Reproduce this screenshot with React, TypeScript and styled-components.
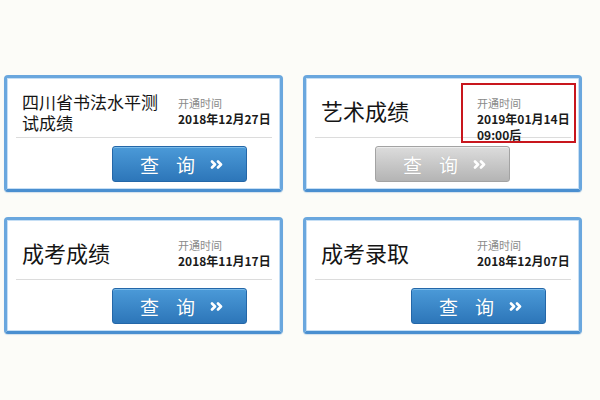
import React from "react";
import styled, { createGlobalStyle, css } from "styled-components";

const Global = createGlobalStyle`
  html, body { margin: 0; padding: 0; background: #fcfcf8; }
  body { font-family: "Noto Sans CJK SC", "Noto Sans", sans-serif; width: 600px; height: 400px; overflow: hidden; }
`;

const Grid = styled.div`
  display: grid;
  grid-template-columns: 279px 279px;
  grid-auto-rows: 117px;
  column-gap: 20px;
  row-gap: 25px;
  padding: 75px 0 0 4px;
`;

const Card = styled.div`
  box-sizing: border-box;
  border: 3px solid #6aa7de;
  border-bottom-color: #4a8fd0;
  border-radius: 4px;
  background: #fff;
  box-shadow: inset 0 0 0 1px #c6dff5, 0 1px 1px rgba(80, 140, 200, 0.25);
  display: flex;
  flex-direction: column;
`;

const Top = styled.div`
  box-sizing: border-box;
  height: 59px;
  display: flex;
  padding: 10px 2px 0 15px;
`;

const Title = styled.div<{ $small?: boolean }>`
  flex: 1;
  align-self: center;
  margin-bottom: ${(p) => (p.$small ? "2px" : "5px")};
  color: #151515;
  font-size: ${(p) => (p.$small ? "17px" : "22px")};
  line-height: ${(p) => (p.$small ? "21px" : "24px")};
  padding-right: 8px;
`;

const Info = styled.div`
  position: relative;
  width: 100px;
  margin-top: 8px;
  align-self: flex-start;
`;

const Label = styled.div`
  font-size: 11px;
  line-height: 15px;
  color: #8a8a8a;
`;

const DateText = styled.div`
  font-size: 12px;
  line-height: 16px;
  font-weight: 700;
  color: #1a1a1a;
  white-space: nowrap;
`;

const Highlight = styled.span`
  position: absolute;
  top: -13px;
  left: -16px;
  width: 115px;
  height: 60px;
  box-sizing: border-box;
  border: 2px solid #c8161d;
  pointer-events: none;
`;

const Divider = styled.div`
  height: 1px;
  background: #dcdcdc;
  margin: 0 8px 0 9px;
`;

const Bottom = styled.div`
  display: flex;
  padding-top: 8px;
`;

const Button = styled.div<{ $shift: number; $disabled?: boolean }>`
  box-sizing: border-box;
  width: 135px;
  height: 36px;
  margin-left: ${(p) => p.$shift}px;
  border-radius: 3px;
  display: flex;
  align-items: center;
  padding-left: 27px;
  color: #fff;
  font-size: 19px;
  text-shadow: 0 0 1px rgba(0, 0, 0, 0.15);
  ${(p) =>
    p.$disabled
      ? css`
          background: linear-gradient(#dcdcdc, #b4b4b4);
          border: 1px solid #a3a3a3;
          box-shadow: inset 0 1px 0 #ececec;
        `
      : css`
          background: linear-gradient(#4b9ad8, #2d76b9);
          border: 1px solid #2467a8;
          box-shadow: inset 0 1px 0 #7bbbea;
        `}
`;

const Char = styled.span`
  line-height: 1;
  & + & { margin-left: 17px; }
`;

const Arrows = styled.svg`
  margin-left: 15px;
`;

type Item = {
  title: React.ReactNode;
  small?: boolean;
  date: string;
  extra?: string;
  highlight?: boolean;
  shift: number;
  disabled?: boolean;
};

const items: Item[] = [
  { title: "四川省书法水平测试成绩", small: true, date: "2018年12月27日", shift: 105 },
  { title: "艺术成绩", date: "2019年01月14日", extra: "09:00后", highlight: true, shift: 69, disabled: true },
  { title: "成考成绩", date: "2018年11月17日", shift: 105 },
  { title: "成考录取", date: "2018年12月07日", shift: 105 },
];

export default function App() {
  return (
    <>
      <Global />
      <Grid>
        {items.map((it, i) => (
          <Card key={i}>
            <Top>
              <Title $small={it.small}>{it.title}</Title>
              <Info>
                <Label>开通时间</Label>
                <DateText>{it.date}</DateText>
                {it.extra && <DateText>{it.extra}</DateText>}
                {it.highlight && <Highlight />}
              </Info>
            </Top>
            <Divider />
            <Bottom>
              <Button $shift={it.shift} $disabled={it.disabled}>
                <Char>查</Char>
                <Char>询</Char>
                <Arrows width="14" height="9" viewBox="0 0 14 9">
                  <path d="M2 1.5 L5 4.5 L2 7.5 M8 1.5 L11 4.5 L8 7.5" fill="none" stroke="#fff" strokeWidth="2.6" strokeLinecap="round" strokeLinejoin="round" />
                </Arrows>
              </Button>
            </Bottom>
          </Card>
        ))}
      </Grid>
    </>
  );
}
